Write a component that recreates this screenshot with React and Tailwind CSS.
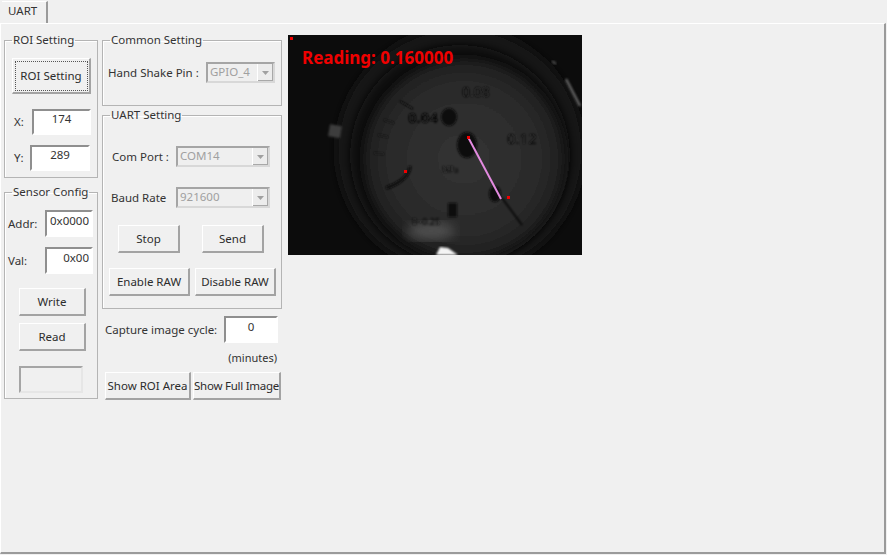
const font = "font-['Noto_Sans','Liberation_Sans',sans-serif]";

function Group({ title, className = "", children }) {
  return (
    <fieldset className={`border border-[#b4b4b4] shadow-[inset_1px_1px_0_#fff] ${className}`}>
      <legend className="ml-[7px] px-[1px] text-[11.5px] leading-[14px] text-[#333]">{title}</legend>
      {children}
    </fieldset>
  );
}

function Btn({ className = "", children }) {
  return (
    <button className={`box-border shrink-0 whitespace-nowrap overflow-hidden border border-t-white border-l-white border-r-[2px] border-b-[2px] border-r-[#a3a3a3] border-b-[#a3a3a3] bg-[#f0f0f0] text-[11.5px] text-[#2c2c2c] ${className}`}>
      {children}
    </button>
  );
}

function Field({ value, className = "" }) {
  return (
    <input
      readOnly
      value={value}
      className={`box-border shrink-0 border-2 border-t-[#8f8f8f] border-l-[#8f8f8f] border-r-white border-b-white bg-white pb-[7px] text-[11.5px] text-[#333] outline-none ${className}`}
    />
  );
}

function Combo({ value, className = "" }) {
  return (
    <div className={`box-border flex h-[21px] shrink-0 items-center justify-between border-2 border-t-[#a5a5a5] border-l-[#a5a5a5] border-r-[#d8d8d8] border-b-[#d8d8d8] bg-[#efefef] pl-[2px] text-[11.5px] text-[#a0a0a0] ${className}`}>
      <span className="-mt-[2px]">{value}</span>
      <div className="flex h-full w-[16px] items-center justify-center border-l border-l-white bg-[#ececec] shadow-[inset_-1px_-1px_0_#a8a8a8]">
        <svg width="7" height="4" viewBox="0 0 7 4"><path d="M0 0h7L3.5 4z" fill="#a0a0a0" /></svg>
      </div>
    </div>
  );
}

function Gauge() {
  return (
    <svg viewBox="0 0 294 220" className="h-[220px] w-[294px] shrink-0 bg-[#0c0c0c]">
      <defs>
        <radialGradient id="dial" cx="50%" cy="50%" r="52%">
          <stop offset="0%" stopColor="#323232" />
          <stop offset="70%" stopColor="#2b2b2b" />
          <stop offset="100%" stopColor="#1c1c1c" />
        </radialGradient>
        <filter id="b1"><feGaussianBlur stdDeviation="1" /></filter>
        <filter id="b2"><feGaussianBlur stdDeviation="4" /></filter>
        <filter id="b3"><feGaussianBlur stdDeviation="6" /></filter>
        <clipPath id="face"><circle cx="176" cy="124" r="100" /></clipPath>
      </defs>
      <circle cx="172" cy="116" r="124" fill="#121212" filter="url(#b2)" />
      <circle cx="172" cy="120" r="110" fill="#0b0b0b" filter="url(#b2)" />
      <circle cx="176" cy="124" r="100" fill="url(#dial)" filter="url(#b2)" />
      <g clipPath="url(#face)">
        <ellipse cx="143" cy="196" rx="24" ry="9" fill="#505050" filter="url(#b3)" />
      </g>
      <g filter="url(#b1)" fill="#0a0a0a" fontFamily="'Noto Sans', sans-serif">
        <text x="120" y="88" fontSize="15" fontWeight="700">0.04</text>
        <text x="174" y="62" fontSize="14" fill="#141414">0.08</text>
        <text x="219" y="109" fontSize="15" fill="#111">0.12</text>
        <ellipse cx="161" cy="82" rx="8" ry="9" fill="#0c0c0c" />
        <ellipse cx="179" cy="110" rx="10" ry="13" fill="#0c0c0c" />
        <ellipse cx="207" cy="159" rx="6" ry="8" fill="#101010" />
        <path d="M122 131 C122 142 108 150 98 153" stroke="#0e0e0e" strokeWidth="3" fill="none" />
        <path d="M214 163 L234 190" stroke="#060606" strokeWidth="1.5" />
        <rect x="160" y="168" width="9" height="14" fill="#0e0e0e" />
        <text x="154" y="138" fontSize="8" fill="#151515">MPa</text>
        <text x="124" y="190" fontSize="9" fill="#141414">0~0.25</text>
        <path d="M112 66 L125 74" stroke="#0e0e0e" strokeWidth="1.5" />
        <path d="M96 85 L106 88 M90 100 L100 102 M86 118 L96 119" stroke="#161616" strokeWidth="1.5" />
      </g>
      <rect x="41" y="90" width="12" height="12" fill="#3e3e3e" transform="rotate(10 46 96)" filter="url(#b1)" />
      <path d="M264 26 L268 29" stroke="#555" strokeWidth="2" fill="none" filter="url(#b1)" />
      <path d="M278 44 L292 71" stroke="#666" strokeWidth="2.5" fill="none" filter="url(#b1)" />
      <path d="M148 220 L152 212 L160 213 L170 220 Z" fill="#f4f4f4" filter="url(#b1)" />
      <line x1="180" y1="102" x2="213" y2="164" stroke="#e38ae0" strokeWidth="2" />
      <g fill="#f00000">
        <rect x="2" y="2" width="3" height="3" />
        <rect x="179" y="101" width="3" height="3" />
        <rect x="116" y="135" width="3" height="3" />
        <rect x="219" y="161" width="3" height="3" />
      </g>
      <text x="14" y="29" fontSize="17" fontWeight="700" fill="#f00000" fontFamily="'Noto Sans', sans-serif">Reading: 0.160000</text>
    </svg>
  );
}

export default function App() {
  return (
    <div className={`flex h-[555px] w-[887px] flex-col overflow-hidden bg-[#f0f0f0] ${font}`}>
      {/* Tab strip */}
      <div className="flex h-[23px] shrink-0 items-end pl-[2px]">
        <div className="flex h-[22px] w-[46px] items-center border-r-2 border-r-[#9a9a9a] border-t border-t-white pb-[3px] pl-[6px] text-[11.5px] text-[#333]">
          UART
        </div>
      </div>

      {/* Tab page */}
      <div className="mb-[1px] mr-[1px] flex min-h-0 flex-1 gap-[4px] border-t border-l border-r-2 border-b-2 border-t-white border-l-white border-r-[#9a9a9a] border-b-[#9a9a9a] pl-[3px] pt-[9px]">
        {/* Left column */}
        <div className="flex w-[94px] shrink-0 flex-col gap-[7px]">
          <Group title="ROI Setting" className="h-[145px]">
            <Btn className="ml-[7px] mt-[11px] h-[36px] w-[79px] outline outline-1 -outline-offset-4 outline-dotted outline-[#555]">ROI Setting</Btn>
            <div className="mt-[15px] flex items-center pl-[9px]">
              <span className="w-[18px] text-[11.5px] text-[#333]">X:</span>
              <Field value="174" className="h-[26px] w-[59px] text-center" />
            </div>
            <div className="mt-[10px] flex items-center pl-[9px]">
              <span className="w-[16px] text-[11.5px] text-[#333]">Y:</span>
              <Field value="289" className="h-[26px] w-[60px] text-center" />
            </div>
          </Group>
          <Group title="Sensor Config" className="h-[214px]">
            <div className="mt-[11px] flex items-center pl-[3px]">
              <span className="w-[37px] text-[11.5px] text-[#333]">Addr:</span>
              <Field value="0x0000" className="h-[27px] w-[48px] pr-[2px] text-right" />
            </div>
            <div className="mt-[10px] flex items-center pl-[3px]">
              <span className="w-[37px] text-[11.5px] text-[#333]">Val:</span>
              <Field value="0x00" className="h-[27px] w-[48px] pr-[2px] text-right" />
            </div>
            <Btn className="ml-[14px] mt-[14px] block h-[28px] w-[67px]">Write</Btn>
            <Btn className="ml-[14px] mt-[7px] block h-[28px] w-[67px]">Read</Btn>
            <div className="ml-[14px] mt-[15px] h-[27px] w-[64px] border-2 border-t-[#a5a5a5] border-l-[#a5a5a5] border-r-[#e6e6e6] border-b-[#e6e6e6]" />
          </Group>
        </div>

        {/* Middle column */}
        <div className="flex w-[180px] shrink-0 flex-col">
          <Group title="Common Setting" className="h-[73px]">
            <div className="mt-[15px] flex items-center pl-[5px]">
              <span className="w-[98px] text-[11.5px] text-[#333]">Hand Shake Pin :</span>
              <Combo value="GPIO_4" className="w-[69px]" />
            </div>
          </Group>
          <Group title="UART Setting" className="mt-[2px] h-[201px]">
            <div className="mt-[24px] flex items-center pl-[9px]">
              <span className="w-[64px] text-[11.5px] text-[#333]">Com Port :</span>
              <Combo value="COM14" className="w-[94px]" />
            </div>
            <div className="mt-[20px] flex items-center pl-[8px]">
              <span className="w-[65px] text-[11.5px] text-[#333]">Baud Rate</span>
              <Combo value="921600" className="w-[94px]" />
            </div>
            <div className="mt-[17px] flex gap-[22px] pl-[15px]">
              <Btn className="h-[28px] w-[62px]">Stop</Btn>
              <Btn className="h-[28px] w-[62px]">Send</Btn>
            </div>
            <div className="mt-[15px] flex gap-[5px] pl-[6px]">
              <Btn className="h-[28px] w-[81px]">Enable RAW</Btn>
              <Btn className="h-[28px] w-[81px]">Disable RAW</Btn>
            </div>
          </Group>
          <div className="mt-[7px] flex items-center pl-[3px]">
            <span className="w-[119px] text-[11.5px] text-[#333]">Capture image cycle:</span>
            <Field value="0" className="h-[27px] w-[54px] text-center" />
          </div>
          <div className="mt-[7px] pr-[5px] text-right text-[11px] leading-[15px] text-[#333]">(minutes)</div>
          <div className="mt-[7px] flex gap-[2px] pl-[3px]">
            <Btn className="h-[28px] w-[86px]">Show ROI Area</Btn>
            <Btn className="h-[28px] w-[88px] tracking-[-0.25px]">Show Full Image</Btn>
          </div>
        </div>

        {/* Camera frame */}
        <div className="ml-[2px] pt-[2px]">
          <Gauge />
        </div>
      </div>
    </div>
  );
}
